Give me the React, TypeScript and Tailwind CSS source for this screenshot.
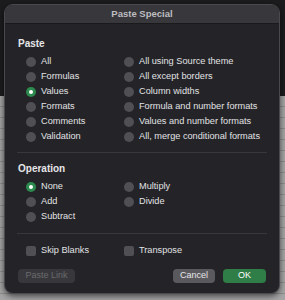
import React from "react";

const font = { fontFamily: "'Liberation Sans', Arial, sans-serif" };

function Radio({ label, checked = false }: { label: string; checked?: boolean }) {
  return (
    <div className="flex items-center h-[15px] gap-[5px] whitespace-nowrap">
      {checked ? (
        <span className="shrink-0 w-[10px] h-[10px] rounded-full bg-[#2d8a4e] flex items-center justify-center">
          <span className="w-[4px] h-[4px] rounded-full bg-white" />
        </span>
      ) : (
        <span className="shrink-0 w-[10px] h-[10px] rounded-full bg-[#4f4f54]" />
      )}
      <span className="text-[9.2px] text-[#e2e2e4] leading-none">{label}</span>
    </div>
  );
}

function Check({ label }: { label: string }) {
  return (
    <div className="flex items-center h-[15px] gap-[5px] whitespace-nowrap">
      <span className="shrink-0 w-[10px] h-[10px] rounded-[2px] bg-[#4f4f54]" />
      <span className="text-[9.2px] text-[#e2e2e4] leading-none">{label}</span>
    </div>
  );
}

export default function App() {
  return (
    <div className="relative w-[285px] h-[300px] overflow-hidden" style={font}>
      <div className="flex flex-col w-full h-full">
        <div className="h-[96px] bg-[#1c1c1e]" />
        <div className="flex-1 bg-[#a5a5a5] bg-[repeating-linear-gradient(to_bottom,transparent_0px,transparent_10px,#8d8d8d_10px,#8d8d8d_11px)]" />
      </div>
      <div className="absolute left-[4px] top-[4px] w-[276px] h-[290px] rounded-[9px] bg-[#242428] border border-[#4a4a4e] overflow-hidden flex flex-col shadow-[0_2px_6px_rgba(0,0,0,0.6)]">
        <div className="h-[19px] bg-[#38383c] border-b border-[#1a1a1c] flex items-center justify-center">
          <span className="text-[9.5px] font-bold text-[#bdbdc0]">Paste Special</span>
        </div>
        <div className="flex flex-col px-[13px] pt-[15px]">
          <div className="text-[10px] font-bold text-[#e6e6e8] leading-none mb-[5px]">Paste</div>
          <div className="grid grid-cols-[98px_1fr] pl-[8px]">
            <div className="flex flex-col">
              <Radio label="All" />
              <Radio label="Formulas" />
              <Radio label="Values" checked />
              <Radio label="Formats" />
              <Radio label="Comments" />
              <Radio label="Validation" />
            </div>
            <div className="flex flex-col">
              <Radio label="All using Source theme" />
              <Radio label="All except borders" />
              <Radio label="Column widths" />
              <Radio label="Formula and number formats" />
              <Radio label="Values and number formats" />
              <Radio label="All, merge conditional formats" />
            </div>
          </div>
          <div className="h-px bg-[#38383c] mt-[8px] -mx-[1px]" />
          <div className="text-[10px] font-bold text-[#e6e6e8] leading-none mt-[11px] mb-[5px]">Operation</div>
          <div className="grid grid-cols-[98px_1fr] pl-[8px]">
            <div className="flex flex-col">
              <Radio label="None" checked />
              <Radio label="Add" />
              <Radio label="Subtract" />
            </div>
            <div className="flex flex-col">
              <Radio label="Multiply" />
              <Radio label="Divide" />
            </div>
          </div>
          <div className="h-px bg-[#38383c] mt-[9px] -mx-[1px]" />
          <div className="grid grid-cols-[98px_1fr] pl-[8px] mt-[9px]">
            <Check label="Skip Blanks" />
            <Check label="Transpose" />
          </div>
          <div className="flex items-center mt-[11px]">
            <div className="w-[57px] h-[14px] rounded-[4px] bg-[#38383c] flex items-center justify-center text-[9px] text-[#6a6a6e]">Paste Link</div>
            <div className="flex-1" />
            <div className="w-[42px] h-[14px] rounded-[4px] bg-[#5a5a5e] flex items-center justify-center text-[9px] text-[#e6e6e8]">Cancel</div>
            <div className="w-[43px] h-[14px] rounded-[4px] bg-[#2f7d47] flex items-center justify-center text-[9px] text-white ml-[8px]">OK</div>
          </div>
        </div>
      </div>
    </div>
  );
}
